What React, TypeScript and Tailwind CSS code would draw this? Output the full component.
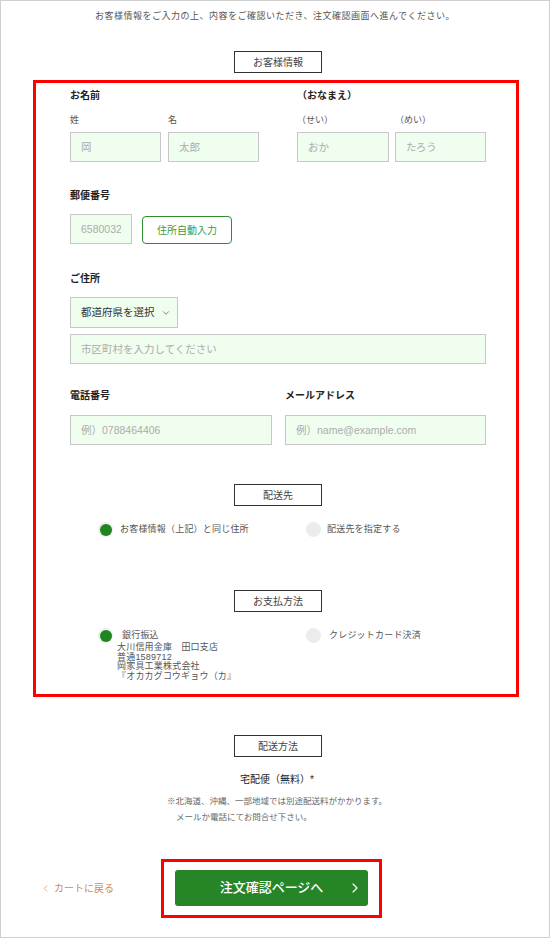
import { ChevronDown, ChevronLeft, ChevronRight } from 'lucide-react';

const FONT = { fontFamily: '"Liberation Sans", "Noto Sans CJK JP", sans-serif' };

const SectionTitle = ({ children, className = '' }: { children: string; className?: string }) => (
  <div
    className={`flex h-[22px] w-[88px] items-center justify-center border border-[#333] text-[10px] text-[#444] ${className}`}
  >
    {children}
  </div>
);

const Field = ({ placeholder, className = '' }: { placeholder: string; className?: string }) => (
  <input
    readOnly
    placeholder={placeholder}
    className={`h-[30px] border border-[#c8c8c8] bg-[#effeee] px-[10px] text-[10.5px] outline-none placeholder:text-[#acacac] ${className}`}
  />
);

const Radio = ({ checked }: { checked?: boolean }) => (
  <span className="flex h-[15px] w-[15px] shrink-0 items-center justify-center rounded-full bg-[#ececec]">
    {checked && <span className="h-[12px] w-[12px] rounded-full bg-[#1e861e]" />}
  </span>
);

export default function App() {
  return (
    <div className="h-[938px] w-[550px] border border-[#cfcfcf] bg-white" style={FONT}>
      <p className="pt-[9px] text-center text-[9px] leading-[12px] tracking-[0.5px] text-[#555]">
        お客様情報をご入力の上、内容をご確認いただき、注文確認画面へ進んでください。
      </p>

      <SectionTitle className="ml-[233px] mt-[29px]">お客様情報</SectionTitle>

      <div className="ml-[32px] mt-[7px] w-[486px] border-[3px] border-[#ff0000] pb-[13px] pl-[34px] pt-[6px]">
        {/* name */}
        <div className="flex">
          <div className="w-[227px]">
            <div className="h-[14px] text-[10px] font-bold leading-[14px] text-[#222]">お名前</div>
            <div className="mt-[11px] flex gap-[7px]">
              <div className="w-[91px]">
                <div className="h-[12px] text-[9px] leading-[12px] text-[#555]">姓</div>
                <Field placeholder="岡" className="mt-[6px] w-[91px]" />
              </div>
              <div className="w-[91px]">
                <div className="h-[12px] text-[9px] leading-[12px] text-[#555]">名</div>
                <Field placeholder="太郎" className="mt-[6px] w-[91px]" />
              </div>
            </div>
          </div>
          <div>
            <div className="h-[14px] text-[10px] font-bold leading-[14px] text-[#222]">（おなまえ）</div>
            <div className="mt-[11px] flex gap-[6px]">
              <div className="w-[92px]">
                <div className="h-[12px] text-[9px] leading-[12px] text-[#555]">（せい）</div>
                <Field placeholder="おか" className="mt-[6px] w-[92px]" />
              </div>
              <div className="w-[91px]">
                <div className="h-[12px] text-[9px] leading-[12px] text-[#555]">（めい）</div>
                <Field placeholder="たろう" className="mt-[6px] w-[91px]" />
              </div>
            </div>
          </div>
        </div>

        {/* postal code */}
        <div className="mt-[27px] h-[14px] text-[10px] font-bold leading-[14px] text-[#222]">郵便番号</div>
        <div className="mt-[11px] flex items-end gap-[10px]">
          <Field placeholder="6580032" className="w-[62px] px-[10px]" />
          <button className="h-[28px] w-[90px] rounded-[4px] border border-[#2f8f2f] text-[10px] text-[#3d9a3d]">
            住所自動入力
          </button>
        </div>

        {/* address */}
        <div className="mt-[28px] h-[14px] text-[10px] font-bold leading-[14px] text-[#222]">ご住所</div>
        <div className="mt-[11px] flex h-[31px] w-[108px] items-center justify-between border border-[#c8c8c8] bg-[#effeee] pl-[10px] pr-[6px] text-[10.5px] text-[#333]">
          <span>都道府県を選択</span>
          <ChevronDown size={10} strokeWidth={1.5} className="text-[#333]" />
        </div>
        <Field placeholder="市区町村を入力してください" className="mt-[6px] w-[416px]" />

        {/* phone / mail */}
        <div className="mt-[25px] flex gap-[13px]">
          <div className="w-[202px]">
            <div className="h-[14px] text-[10px] font-bold leading-[14px] text-[#222]">電話番号</div>
            <Field placeholder="例）0788464406" className="mt-[12px] w-[202px]" />
          </div>
          <div className="w-[201px]">
            <div className="h-[14px] text-[10px] font-bold leading-[14px] text-[#222]">メールアドレス</div>
            <Field placeholder="例）name@example.com" className="mt-[12px] w-[201px]" />
          </div>
        </div>

        {/* shipping destination */}
        <SectionTitle className="ml-[164px] mt-[39px]">配送先</SectionTitle>
        <div className="mt-[16px] flex text-[9px] tracking-[0.2px] text-[#555]">
          <div className="ml-[28px] flex w-[208px] items-center gap-[7px]">
            <Radio checked />
            <span>お客様情報（上記）と同じ住所</span>
          </div>
          <div className="flex items-center gap-[6px]">
            <Radio />
            <span>配送先を指定する</span>
          </div>
        </div>

        {/* payment */}
        <SectionTitle className="ml-[164px] mt-[53px]">お支払方法</SectionTitle>
        <div className="mt-[16px] flex text-[9px] tracking-[0.2px] text-[#555]">
          <div className="ml-[28px] flex w-[208px] items-start gap-[7px]">
            <Radio checked />
            <div>
              <div className="ml-[2px] leading-[15px]">銀行振込</div>
              <div className="-ml-[3px] leading-[9.5px]">
                <div>大川信用金庫　田口支店</div>
                <div>普通1589712</div>
                <div>岡家具工業株式会社</div>
                <div>『オカカグコウギョウ（カ』</div>
              </div>
            </div>
          </div>
          <div className="flex items-start gap-[8px]">
            <Radio />
            <span className="leading-[15px]">クレジットカード決済</span>
          </div>
        </div>
      </div>

      {/* delivery method */}
      <SectionTitle className="ml-[233px] mt-[38px]">配送方法</SectionTitle>
      <div className="mt-[16px] pl-[4px] text-center text-[10px] leading-[14px] text-[#222]">宅配便（無料）*</div>
      <div className="mt-[6px] flex justify-center pl-[4px]">
        <p className="pl-[9px] -indent-[9px] text-[8.5px] leading-[16px] text-[#666]">
          ※北海道、沖縄、一部地域では別途配送料がかかります。
          <br />
          メールか電話にてお問合せ下さい。
        </p>
      </div>

      {/* actions */}
      <div className="mt-[34px] flex items-center pl-[39px]">
        <a className="flex w-[121px] items-center gap-[3px] text-[10px] text-[#d18a52]">
          <ChevronLeft size={11} strokeWidth={1.5} />
          カートに戻る
        </a>
        <div className="w-[221px] border-[3px] border-[#ff0000] px-[11px] pb-[9px] pt-[8px]">
          <button className="grid h-[36px] w-full grid-cols-[1fr_auto_1fr] items-center rounded-[3px] bg-[#268526] px-[5px] text-[13px] font-medium text-white">
            <span />
            <span>注文確認ページへ</span>
            <span className="flex justify-end">
              <ChevronRight size={16} strokeWidth={1.75} />
            </span>
          </button>
        </div>
      </div>
    </div>
  );
}
